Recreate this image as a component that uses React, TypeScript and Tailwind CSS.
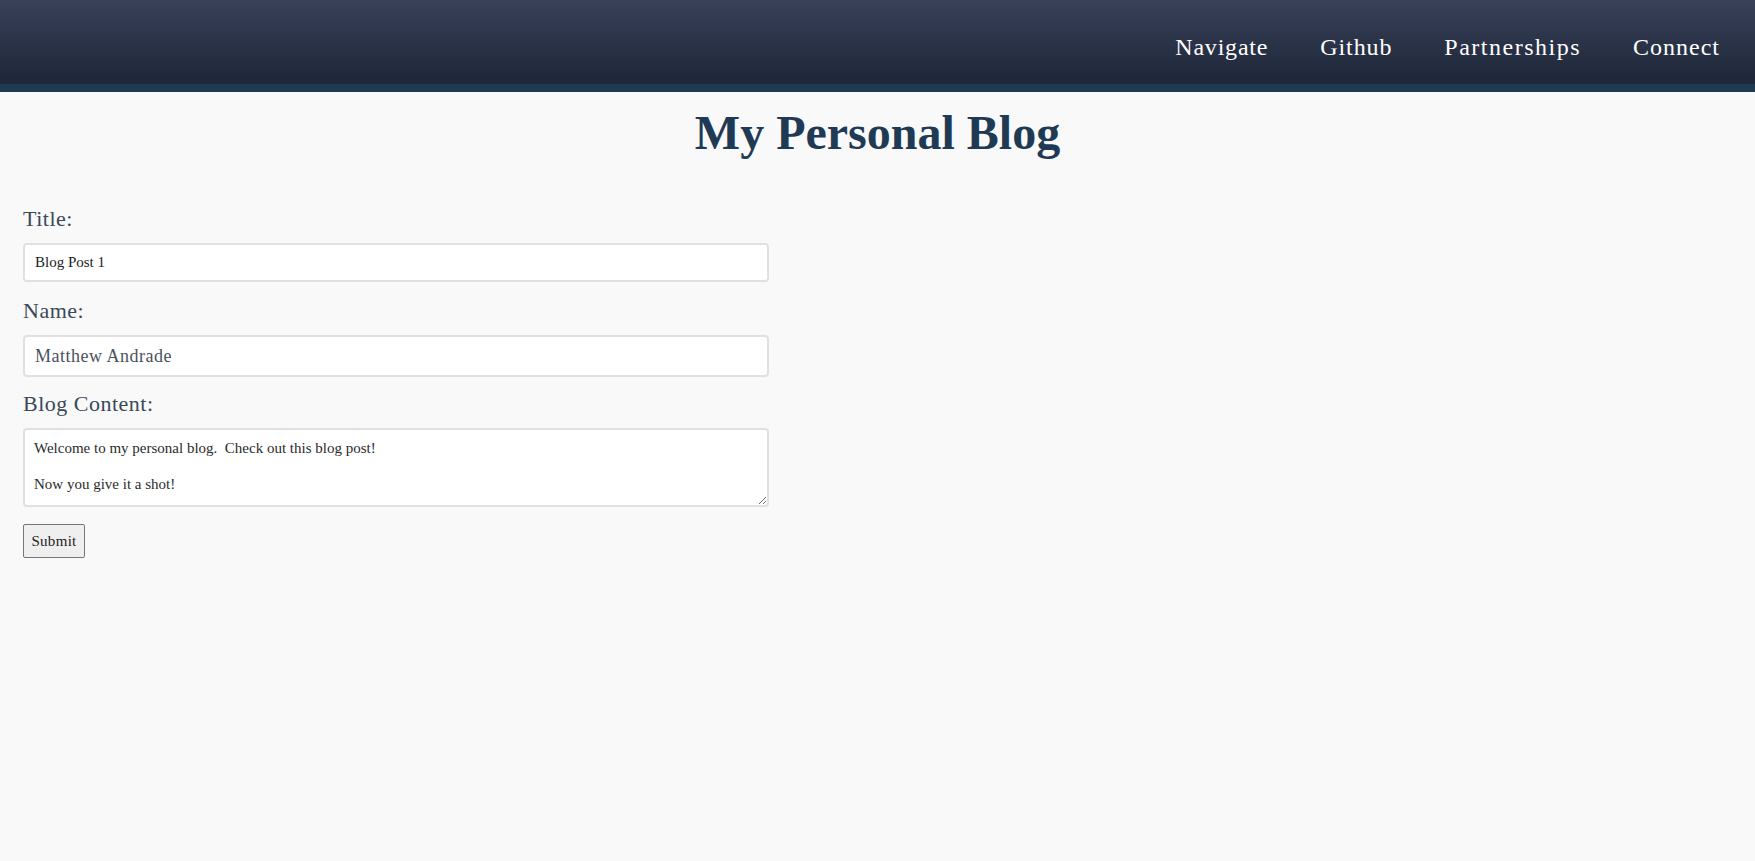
import React from "react";

const serif = { fontFamily: '"Liberation Serif", "Times New Roman", serif' };

export default function App() {
  return (
    <div className="min-h-[861px] w-full bg-[#f9f9f9]" style={serif}>
      <header className="w-full">
        <nav className="h-[83px] w-full bg-gradient-to-b from-[#384159] to-[#1e2638] flex items-center justify-end pr-[35px] pt-[10px] gap-[52px]">
          <a href="#" className="text-white text-[24px] tracking-[0.8px] leading-[28px] no-underline">Navigate</a>
          <a href="#" className="text-white text-[24px] tracking-[0.9px] leading-[28px] no-underline">Github</a>
          <a href="#" className="text-white text-[24px] tracking-[1.5px] leading-[28px] no-underline">Partnerships</a>
          <a href="#" className="text-white text-[24px] tracking-[1px] leading-[28px] no-underline">Connect</a>
        </nav>
        <div className="h-[9px] w-full bg-[#1e3a50] border-t border-[#1b2b44]" />
      </header>

      <main className="px-[23px]">
        <h1 className="mt-[17px] text-center text-[48px] leading-[48px] font-bold text-[#1f3a55]">
          My Personal Blog
        </h1>

        <form className="w-[746px] flex flex-col">
          <label className="mt-[49px] block text-[22px] leading-[26px] tracking-[0.5px] text-[#3a4958]">
            Title:
          </label>
          <input
            type="text"
            defaultValue="Blog Post 1"
            className="mt-[11px] h-[39px] w-full rounded-[4px] border-2 border-[#e0e0e0] bg-white px-[10px] text-[15px] text-[#222] outline-none"
            style={serif}
          />

          <label className="mt-[16px] block text-[22px] leading-[26px] tracking-[0.5px] text-[#3a4958]">
            Name:
          </label>
          <input
            type="text"
            defaultValue="Matthew Andrade"
            className="mt-[11px] h-[42px] w-full rounded-[4px] border-2 border-[#e0e0e0] bg-white px-[10px] text-[18px] tracking-[0.5px] text-[#4a525c] outline-none"
            style={serif}
          />

          <label className="mt-[14px] block text-[22px] leading-[26px] tracking-[0.5px] text-[#3a4958]">
            Blog Content:
          </label>
          <textarea
            defaultValue={"Welcome to my personal blog.  Check out this blog post!\n\nNow you give it a shot!"}
            className="mt-[11px] h-[79px] w-full rounded-[4px] border-2 border-[#e0e0e0] bg-white px-[9px] pt-[9px] text-[15px] leading-[18px] text-[#2a2a2a] outline-none"
            style={serif}
          />

          <div className="mt-[17px]">
            <button
              type="button"
              className="h-[34px] w-[62px] rounded-[2px] border border-[#767676] bg-[#efefef] text-[15px] tracking-[0.3px] text-[#222]"
              style={serif}
            >
              Submit
            </button>
          </div>
        </form>
      </main>
    </div>
  );
}
